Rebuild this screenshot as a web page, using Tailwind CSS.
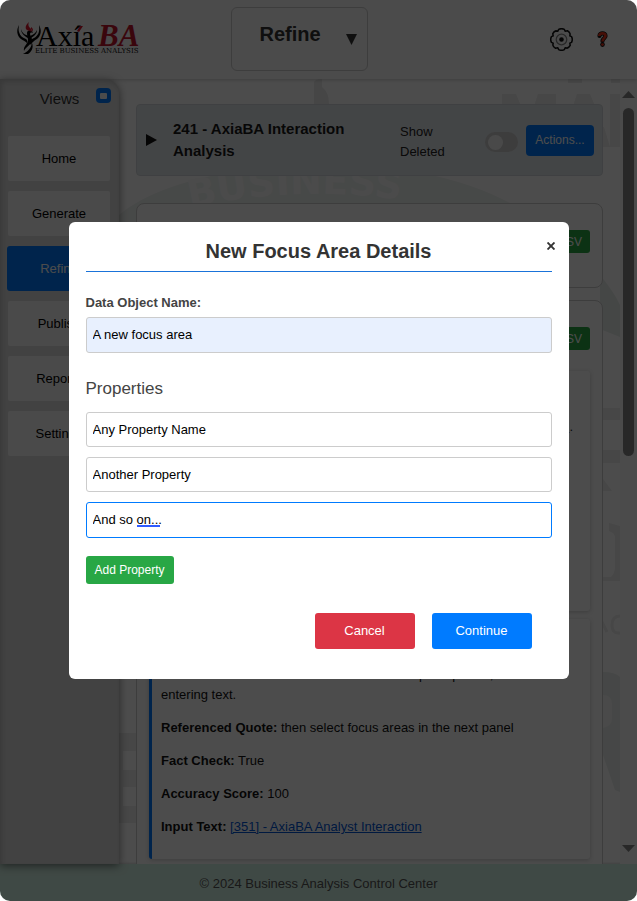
<!DOCTYPE html>
<html lang="en">
<head>
<meta charset="utf-8">
<meta name="viewport" content="width=device-width, initial-scale=1">
<title>Business Analysis Control Center</title>
<script src="https://cdn.jsdelivr.net/npm/@tailwindcss/browser@4"></script>
</head>
<body class="bg-white font-['Liberation_Sans',Arial,sans-serif] text-[13px] leading-5 text-[#212529]">
<div class="relative flex h-screen flex-col overflow-hidden rounded-[10px] bg-white">

  <header class="relative z-10 flex h-[79px] shrink-0 items-center justify-between bg-[#fafafa] pr-[29px] pb-px pl-4 shadow-[0_1px_4px_rgba(0,0,0,0.2)]">
    <svg class="h-9 w-32 overflow-visible" viewBox="0 0 128 36" role="img" aria-label="AxiaBA Elite Business Analysis">
      <g fill="#000">
        <path d="M3 4C0 9 1 15 5 18c2 1.500 4 2 6 4 1-2 0-3-1-4-3-1-6-3-7-7-.6-2-.5-4 0-7z"/>
        <path d="M5 8c0 4 3 7 7 9l1-2C9 14 6 12 5 8z"/>
        <path d="M23 4c3 5 2 11-2 14-3 2-5 3-6 6l-2-3c1-2 3-3 5-4 4-2 6-6 5-13z"/>
        <path d="M21 9c0 4-3 6-6 8l-1-2c3-1 6-3 7-6z"/>
        <path d="M11 12c0-3 5-4 6 0-2-1-3 0-3 1 0 2 2 3 2 6 0 5-6 6-8 11-1-5 4-7 4-11 0-2-1-4-1-7z"/>
        <path d="M16 22c2 5-1 9-4 11H7c4-2 8-5 9-11z"/>
      </g>
      <path d="M13 1c-2 2-4 4-3 7 1 2 3 1 6 3-1-2 0-3-2-4-2-2-2-4-1-6zM15 6c2 1 2 3 2 4l-2-1z" fill="#d9142c"/>
      <text x="20" y="25" font-family="Liberation Serif" font-size="30" fill="#000">Axía</text>
      <path d="M61 10l3-5h3l-4 6z" fill="#d9142c"/>
      <text x="82" y="25" font-family="Liberation Serif" font-size="31" font-weight="700" font-style="italic" fill="#c4142c">BA</text>
      <text x="19" y="32" font-family="DejaVu Serif" font-size="7" fill="#111">ELITE BUSINESS ANALYSIS</text>
    </svg>
    <div class="absolute left-1/2 w-[137px] -translate-x-[88px]">
      <select aria-label="View" class="h-16 w-full appearance-none rounded-md border border-[#ccc] bg-transparent pr-9 pb-2.5 pl-7 text-xl font-bold text-[#333]">
        <option>Refine</option><option>Generate</option><option>Publish</option>
      </select>
      <svg class="pointer-events-none absolute top-[27px] right-[11px] h-[11px] w-[11px]" viewBox="0 0 11 11"><path d="M0 0h11L5.500 11z" fill="#333"/></svg>
    </div>
    <div class="flex items-center gap-6">
      <button aria-label="Settings" class="block">
        <svg class="h-[23px] w-[23px]" viewBox="0 0 24 24" fill="none" stroke="#111" stroke-width="1.600" stroke-linejoin="round">
          <path d="M9 1.500Q12 0 15 1.500L15.800 3.300 18.200 2.900Q20.600 4.200 21 6.200L20.700 8.200 22.500 9Q24 12 22.500 15L20.700 15.800 21.100 18.200Q19.800 20.600 17.800 21L15.800 20.700 15 22.500Q12 24 9 22.500L8.200 20.700 5.800 21.100Q3.400 19.800 3 17.800L3.300 15.800 1.500 15Q0 12 1.500 9L3.300 8.200 2.900 5.800Q4.200 3.400 6.200 3L8.200 3.300z"/>
          <circle cx="12" cy="12" r="5.500" stroke="#888" stroke-width="1.300"/>
          <circle cx="12" cy="12" r="1.600" fill="#111"/>
        </svg>
      </button>
      <button aria-label="Help" class="block">
        <svg class="h-4 w-[11px]" viewBox="0 0 11 16" fill="none">
          <path d="M2.500 5C2.500 1.500 8.500 1.500 8.500 5c0 2-3 2.500-3 5" stroke="#111" stroke-width="4.200" stroke-linecap="round"/>
          <circle cx="5.500" cy="13.600" r="2.300" fill="#111"/>
          <path d="M2.300 5C2.500 1.500 8.500 1.500 8.500 5c0 2-3 2.500-3 5.500" stroke="#e8341c" stroke-width="2.700"/>
          <circle cx="5.500" cy="13.600" r="1.400" fill="#e8341c"/>
        </svg>
      </button>
    </div>
  </header>

  <div class="relative flex min-h-0 flex-1">
    <nav aria-label="Views" class="z-10 w-[119px] shrink-0 rounded-tr-[14px] bg-[#dedede] px-2 shadow-[0_2px_8px_rgba(0,0,0,0.5),inset_2px_3px_5px_rgba(0,0,0,0.15)]">
      <div class="relative h-[57px] pt-2.5 text-center">
        <h2 class="text-[15px] text-[#333]">Views</h2>
        <button aria-label="Collapse views" class="absolute top-[9px] right-0 flex h-[15px] w-[15px] items-center justify-center rounded-[4px] bg-[#007bff]"><span class="h-[6px] w-[7px] rounded-[1px] bg-white"></span></button>
      </div>
      <div class="flex w-[102px] flex-col gap-2.5 text-black">
        <button class="h-[45px] rounded-[2px] bg-[#f8f8f8]">Home</button>
        <button class="h-[45px] rounded-[2px] bg-[#f8f8f8]">Generate</button>
        <button class="-mx-px h-[45px] rounded-[3px] bg-[#007bff] text-white">Refine</button>
        <button class="h-[45px] rounded-[2px] bg-[#f8f8f8]">Publish</button>
        <button class="h-[45px] rounded-[2px] bg-[#f8f8f8]">Reports</button>
        <button class="h-[45px] rounded-[2px] bg-[#f8f8f8]">Settings</button>
      </div>
    </nav>

    <!-- Watermark seal behind the content -->
    <svg class="absolute inset-y-0 left-[119px] h-[785px] w-[501px]" viewBox="119 79 501 785" aria-hidden="true">
      <path d="M119 215Q165 176 290 164Q430 160 510 203L119 260z" fill="#eff3f1"/>
      <path d="M600 275Q614 292 620 305v32l-20-8z" fill="#e8eeeb"/>
      <path d="M314 104V82q1-3 8-3v8q7 5 7 17z" fill="#ebebeb"/>
      <path id="arc" d="M190 208Q320 178 470 212" fill="none"/>
      <text fill="#fbfcfc" font-family="DejaVu Sans" font-size="38" font-weight="700"><textPath href="#arc">BUSINESS</textPath></text>
      <g fill="#ededed">
        <path d="M568 79h14v4h-14zM611 79h9v4h-9zM610 94h10v53h-10z"/>
        <path d="M502 94h14l5 12h-19zM538 94h18v12h-22zM577 94h13l5 12h-22zM600 127h4l6 20h-10z"/>
        <path d="M603 408h17v12h-17zM603 450h17v13h-17zM603 479l9 12h-9zM609 523l11 3v55h-17v-4h8q4-4 4-10v-30q0-4-6-6z"/>
        <path d="M119 733h17v18h-13v19h13v17h-13v19h13v17h-17z"/>
      </g>
      <path d="M600 618l7 14M620 616q-8 0-8 9t8 8" fill="none" stroke="#ededed" stroke-width="3"/>
      <path d="M603 672q12 0 17 5v115l-5-2-12-35z" fill="#eaefed"/>
      <path d="M603 695q9 0 9 9v15q0 7-9 9z" fill="#f8f8f8"/>
    </svg>

    <main class="relative min-w-0 flex-1 overflow-hidden pt-[25px] pr-[17px] pl-[17px]">
      <section class="flex h-[72px] items-center rounded-[4px] border border-[#d4d8dc] bg-[#e2e6ea] px-2">
        <button aria-label="Expand" class="ml-px shrink-0"><svg class="h-3 w-[11px]" viewBox="0 0 11 12"><path d="M0 0l11 6L0 12z" fill="#111"/></svg></button>
        <h1 class="ml-4 min-w-0 flex-1 pr-10 text-[15px] leading-[22px] font-bold text-[#1a1a1a]">241 - AxiaBA Interaction Analysis</h1>
        <label for="deleted" class="w-[85px] pt-1 text-[#222]">Show<br>Deleted</label>
        <span class="relative flex h-5 w-[33px] shrink-0 translate-y-0.5 items-center">
          <input id="deleted" type="checkbox" class="h-5 w-[33px] appearance-none rounded-full bg-[#ccc]">
          <span class="pointer-events-none absolute left-[3px] h-[15px] w-[15px] rounded-full bg-[#f6f6f6]"></span>
        </span>
        <button class="ml-2 h-[31px] w-[68px] shrink-0 rounded-[4px] bg-[#007bff] text-xs text-white">Actions...</button>
      </section>

      <section class="mt-[27px] h-[85px] rounded-lg border border-[#ccc] bg-[#fdfdfd] px-3 pt-[26px] text-right">
        <button class="h-[23px] rounded-[3px] bg-[#28a745] px-2 text-xs text-white">Export CSV</button>
      </section>

      <section class="mt-3 rounded-lg border border-[#ccc] bg-[#fdfdfd] px-3 pt-[26px] pb-8">
        <div class="text-right"><button class="h-[23px] rounded-[3px] bg-[#28a745] px-2 text-xs text-white">Export CSV</button></div>
        <article class="mt-[21px] h-[240px] rounded-[3px] border-l-3 border-[#007bff] bg-white pt-[46px] pr-[17px] text-right shadow-[0_1px_4px_rgba(0,0,0,0.2)]">
          <a href="#" class="text-[#0056b3] underline">control panel</a>.
        </article>
        <article class="mt-2 flex h-[240px] flex-col justify-end gap-[13px] rounded-[3px] border-l-3 border-[#007bff] bg-white px-[9px] pb-[22px] text-[#111] shadow-[0_1px_4px_rgba(0,0,0,0.2)]">
          <p><b>Focus:</b> Users then select areas once their topic is picked, or<br>entering text.</p>
          <p><b>Referenced Quote:</b> then select focus areas in the next panel</p>
          <p><b>Fact Check:</b> True</p>
          <p><b>Accuracy Score:</b> 100</p>
          <p><b>Input Text:</b> <a href="#" class="text-[#0056d6] underline">[351] - AxiaBA Analyst Interaction</a></p>
        </article>
      </section>
    </main>

    <div aria-hidden="true" class="relative flex w-[17px] shrink-0 flex-col items-center bg-[#fafafa] pt-3 pb-3">
      <svg class="h-[7px] w-[13px]" viewBox="0 0 13 7"><path d="M6.500 0L13 7H0z" fill="#888"/></svg>
      <span class="mt-[10px] h-[348px] w-[11px] rounded-full bg-[#888]"></span>
      <svg class="mt-auto h-[7px] w-[13px]" viewBox="0 0 13 7"><path d="M0 0h13L6.500 7z" fill="#888"/></svg>
    </div>
  </div>

  <footer class="flex h-[37px] shrink-0 items-center justify-center bg-[#d4f3e6] pt-0.5 text-[#555] shadow-[0_-1px_2px_rgba(0,0,0,0.15)]">© 2024 Business Analysis Control Center</footer>

  <div class="absolute inset-0 z-20 flex items-center justify-center bg-black/70">
    <form role="dialog" aria-labelledby="dialog-title" class="relative w-[500px] max-w-full rounded-md bg-white px-[17px] pt-[17px] pb-[30px]">
      <button type="button" aria-label="Close" class="absolute top-4 right-3 flex h-4 w-3 items-center justify-center"><svg class="h-2 w-2" viewBox="0 0 8 8"><path d="M.5.5l7 7M7.500.5l-7 7" stroke="#333" stroke-width="1.900"/></svg></button>
      <h2 id="dialog-title" class="border-b border-[#1a73d9] pb-[7px] text-center text-xl leading-[25px] font-bold text-[#333]">New Focus Area Details</h2>
      <label for="object-name" class="mt-[21px] block font-bold text-[#444]">Data Object Name:</label>
      <input id="object-name" value="A new focus area" class="mt-1 block h-9 w-full rounded-[3px] border border-[#ccc] bg-[#e8f0fe] px-1.5 pb-0.5 text-black">
      <h3 class="mt-6 text-[17px] leading-6 text-[#444]">Properties</h3>
      <div class="mt-[11px] flex flex-col gap-2.5">
        <input aria-label="Property 1" value="Any Property Name" class="h-[35px] rounded-[3px] border border-[#ccc] px-1.5 text-black">
        <input aria-label="Property 2" value="Another Property" class="h-[35px] rounded-[3px] border border-[#ccc] px-1.5 text-black">
        <div class="relative">
          <input aria-label="Property 3" value="And so on..." class="block h-9 w-full rounded-[3px] border border-[#007bff] px-1.5 pb-0.5 text-black outline-none">
          <span class="absolute bottom-[11px] left-[51px] h-0.5 w-[23px] bg-[#2f5bff]"></span>
        </div>
      </div>
      <button type="button" class="mt-[18px] block h-7 w-[88px] rounded-[3px] bg-[#28a745] text-xs text-white">Add Property</button>
      <div class="mt-[29px] flex justify-end gap-[17px] pr-5 text-white">
        <button type="button" class="h-9 w-[100px] rounded-[3px] bg-[#dc3545]">Cancel</button>
        <button type="submit" class="h-9 w-[100px] rounded-[3px] bg-[#007bff]">Continue</button>
      </div>
    </form>
  </div>
</div>
</body>
</html>
